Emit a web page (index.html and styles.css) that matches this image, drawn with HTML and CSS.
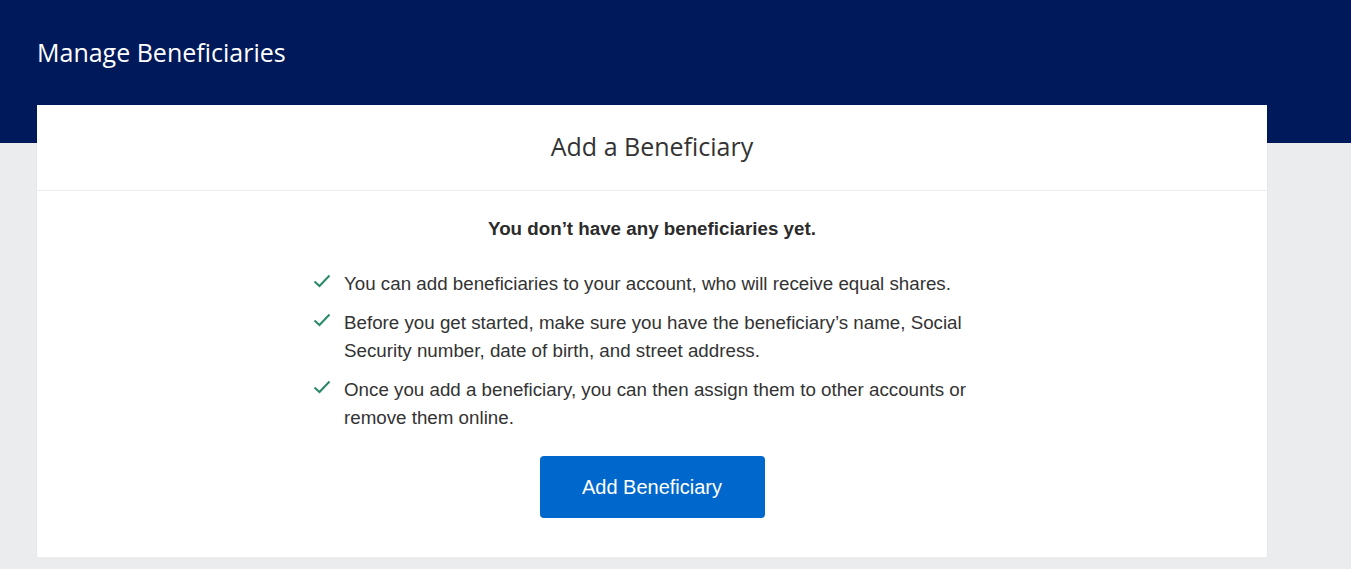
FILE: index.html
```html
<!DOCTYPE html>
<html lang="en">
<head>
<meta charset="utf-8">
<title>Manage Beneficiaries</title>
<link rel="stylesheet" href="styles.css">
</head>
<body>
<header class="masthead">
  <h1 class="page-title">Manage Beneficiaries</h1>
</header>
<main class="content">
  <section class="card">
    <div class="card-head">
      <h2 class="card-title">Add a Beneficiary</h2>
    </div>
    <div class="card-body">
      <p class="empty-msg">You don’t have any beneficiaries yet.</p>
      <ul class="checklist">
        <li><svg class="check" viewBox="0 0 18 14" width="18" height="14"><path d="M1.5 7.5 L6.5 12 L16.5 1.5" fill="none" stroke="#2b8a66" stroke-width="2"/></svg><span>You can add beneficiaries to your account, who will receive equal shares.</span></li>
        <li><svg class="check" viewBox="0 0 18 14" width="18" height="14"><path d="M1.5 7.5 L6.5 12 L16.5 1.5" fill="none" stroke="#2b8a66" stroke-width="2"/></svg><span>Before you get started, make sure you have the beneficiary’s name, Social Security number, date of birth, and street address.</span></li>
        <li><svg class="check" viewBox="0 0 18 14" width="18" height="14"><path d="M1.5 7.5 L6.5 12 L16.5 1.5" fill="none" stroke="#2b8a66" stroke-width="2"/></svg><span>Once you add a beneficiary, you can then assign them to other accounts or remove them online.</span></li>
      </ul>
      <button class="primary-btn" type="button">Add Beneficiary</button>
    </div>
  </section>
</main>
</body>
</html>
```

FILE: styles.css
```css
html, body {
  margin: 0;
  padding: 0;
}
body {
  background: #ebecee;
  font-family: "Liberation Sans", Arial, sans-serif;
  color: #333;
}
.masthead {
  background: #00195a;
  height: 143px;
  padding: 0 37px;
  box-sizing: border-box;
}
.page-title {
  margin: 0;
  padding-top: 36px;
  font-family: "Open Sans", sans-serif;
  font-weight: 400;
  font-size: 25px;
  line-height: 32px;
  color: #fff;
}
.content {
  padding: 0 84px 0 37px;
  margin-top: -38px;
}
.card {
  background: #fff;
  box-shadow: 0 1px 1px rgba(0,0,0,0.12);
}
.card-head {
  height: 85px;
  border-bottom: 1px solid #ececec;
  display: flex;
  align-items: center;
  justify-content: center;
}
.card-title {
  margin: 0 0 4px;
  font-family: "Open Sans", sans-serif;
  font-weight: 400;
  font-size: 25px;
  line-height: 32px;
  color: #333;
}
.card-body {
  display: flex;
  flex-direction: column;
  align-items: center;
  padding: 26px 0 39px;
}
.empty-msg {
  margin: 0;
  font-size: 18.75px;
  font-weight: 700;
  line-height: 24px;
  color: #2b2b2b;
}
.checklist {
  list-style: none;
  margin: 29px 0 0;
  padding: 0;
  width: 680px;
  box-sizing: border-box;
}
.checklist li {
  display: flex;
  align-items: flex-start;
  gap: 13px;
  font-size: 18.75px;
  line-height: 28px;
  color: #333;
  margin-bottom: 11px;
  padding-right: 20px;
}
.check {
  flex: none;
  margin-top: 4px;
  margin-left: 1px;
}
.primary-btn {
  margin-top: 13px;
  width: 225px;
  height: 62px;
  border: none;
  border-radius: 4px;
  background: #0067cc;
  color: #fff;
  font-family: "Liberation Sans", Arial, sans-serif;
  font-size: 20px;
  cursor: pointer;
}
```
